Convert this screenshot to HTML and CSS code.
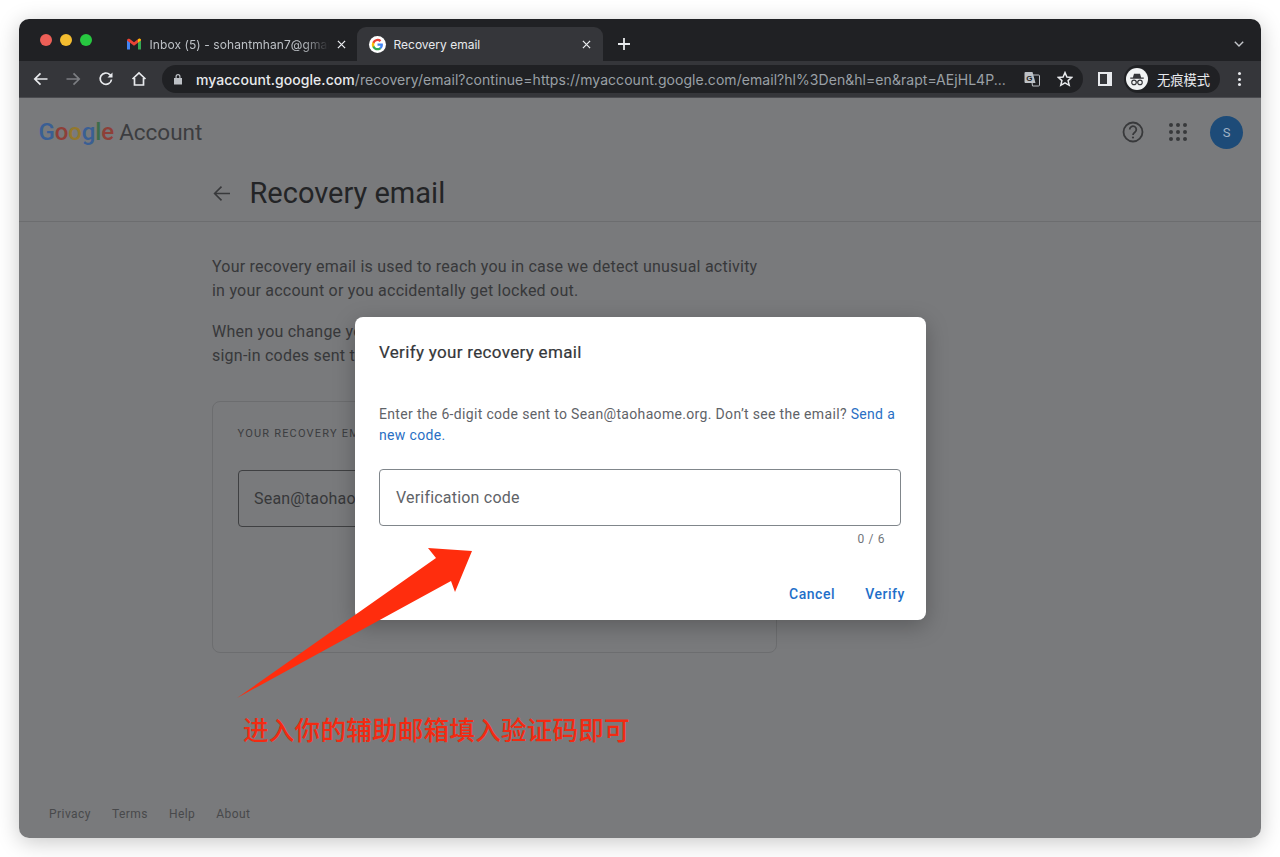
FILE: index.html
```html
<!DOCTYPE html>
<html lang="en">
<head>
<meta charset="utf-8">
<title>Recovery email</title>
<link rel="stylesheet" href="styles.css">
</head>
<body>
<div class="window">
  <div class="tabstrip">
    <div class="lights"><span class="light red"></span><span class="light yellow"></span><span class="light green"></span></div>
    <div class="tab inactive">
      <svg class="favicon" viewBox="0 0 16 16"><path d="M1 13.500V4l3 2.200v7.300z" fill="#4285f4"/><path d="M15 13.500V4l-3 2.200v7.300z" fill="#34a853"/><path d="M1 4.500C1 2.800 2.600 2.200 3.800 3L8 6.200 12.200 3C13.400 2.200 15 2.800 15 4.500L12 6.700 8 9.700 4 6.700z" fill="#ea4335"/><path d="M12 6.500 15 4.300C15 3.200 14.300 2.500 13.500 2.500L12 3.200z" fill="#fbbc04"/></svg>
      <span class="tab-title fade">Inbox (5) - sohantmhan7@gmail.com</span>
      <svg class="tab-close" viewBox="0 0 10 10"><path d="M1 1l8 8M9 1l-8 8"/></svg>
    </div>
    <div class="tab active">
      <span class="g-badge"><svg viewBox="0 0 18 18"><path d="M16.500 9.200c0-.6-.1-1.100-.2-1.600H9v3h4.200a3.600 3.600 0 0 1-1.600 2.400v2h2.600c1.500-1.400 2.300-3.400 2.300-5.800z" fill="#4285f4"/><path d="M9 17c2.100 0 3.900-.7 5.200-1.900l-2.600-2c-.7.500-1.600.8-2.600.8-2 0-3.700-1.400-4.300-3.200H2v2A8 8 0 0 0 9 17z" fill="#34a853"/><path d="M4.700 10.700a4.800 4.800 0 0 1 0-3.100v-2H2a8 8 0 0 0 0 7.200z" fill="#fbbc04"/><path d="M9 4.200c1.200 0 2.200.4 3 1.200l2.300-2.300A8 8 0 0 0 2 5.600l2.700 2C5.300 5.700 7 4.200 9 4.200z" fill="#ea4335"/></svg></span>
      <span class="tab-title">Recovery email</span>
      <svg class="tab-close" viewBox="0 0 10 10"><path d="M1 1l8 8M9 1l-8 8"/></svg>
    </div>
    <svg class="new-tab" viewBox="0 0 12 12"><path d="M6 0v12M0 6h12"/></svg>
    <svg class="tab-menu" viewBox="0 0 10 6"><path d="M.8.800 5 5l4.200-4.200"/></svg>
  </div>
  <div class="toolbar">
    <svg class="tool" viewBox="0 0 16 16"><path d="M14.500 8H2M7.500 2.300 1.800 8l5.700 5.700"/></svg>
    <svg class="tool dim" viewBox="0 0 16 16"><path d="M1.500 8H14M8.500 2.300 14.200 8l-5.700 5.700"/></svg>
    <svg class="tool" viewBox="0 0 16 16"><path d="M13.500 8.500A5.700 5.700 0 1 1 11.800 3.600L13.800 5.500"/><path class="solid" d="M14.500 1.500v5h-5z"/></svg>
    <svg class="tool" viewBox="0 0 16 16"><path d="M1.500 8 8 2l6.500 6M3.500 7v7h9V7"/></svg>
    <div class="omnibox">
      <svg class="lock" viewBox="0 0 10 12"><path d="M2.500 5V3.500a2.500 2.500 0 0 1 5 0V5h1.500v6.500H1V5zM3.700 5h2.600V3.500a1.300 1.300 0 0 0-2.600 0z"/></svg>
      <div class="url"><b>myaccount.google.com</b>/recovery/email?continue=https://myaccount.google.com/email?hl%3Den&amp;hl=en&amp;rapt=AEjHL4P...</div>
      <svg class="translate" viewBox="0 0 16 16"><path class="back-sheet" d="M7 4h7.500a1 1 0 0 1 1 1v9a1 1 0 0 1-1 1H8.500z"/><path class="front-sheet" d="M1.500 1h7l3 11h-10a1 1 0 0 1-1-1V2a1 1 0 0 1 1-1z"/><text x="2.300" y="9.500" class="g-letter">G</text></svg>
      <svg class="star" viewBox="0 0 16 16"><path d="M8 1.600l1.900 4.400 4.800.4-3.600 3.200 1.100 4.700L8 11.800l-4.200 2.500 1.100-4.700L1.300 6.400 6.100 6z"/></svg>
    </div>
    <div class="side-panel"></div>
    <div class="incognito">
      <span class="incognito-badge"><svg viewBox="0 0 24 24"><path class="hat" d="M8 5h8l1.500 5H21v1.500H3V10h3.500z"/><circle class="glass" cx="8" cy="16.500" r="3"/><circle class="glass" cx="16" cy="16.500" r="3"/><path class="glass" d="M11 16h2"/></svg></span>
      <span class="incognito-text">无痕模式</span>
    </div>
    <div class="kebab"><i></i><i></i><i></i></div>
  </div>
  <div class="page">
    <header class="page-head">
      <div class="brand"><span class="g-blue">G</span><span class="g-red">o</span><span class="g-yellow">o</span><span class="g-blue">g</span><span class="g-green">l</span><span class="g-red">e</span><span class="brand-sub">Account</span></div>
      <div class="head-icons">
        <svg class="help" viewBox="0 0 24 24"><circle cx="12" cy="12" r="9.500"/><path d="M8.700 9.500a3.300 3.300 0 1 1 5.200 2.700c-1.200.9-1.900 1.400-1.900 2.800"/><circle class="dot" cx="12" cy="17.500" r="1.100"/></svg>
        <div class="apps"><i></i><i></i><i></i><i></i><i></i><i></i><i></i><i></i><i></i></div>
        <div class="avatar">S</div>
      </div>
    </header>
    <div class="title-row">
      <svg class="title-back" viewBox="0 0 16 16"><path d="M16 8H1.500M8 1.500 1.500 8 8 14.500"/></svg>
      <h1>Recovery email</h1>
    </div>
    <main class="content">
      <p>Your recovery email is used to reach you in case we detect unusual activity<br>in your account or you accidentally get locked out.</p>
      <p>When you change your recovery email, you’ll continue to receive security alerts and<br>sign-in codes sent to your previous recovery email for 7 days.</p>
      <section class="card">
        <div class="card-label">YOUR RECOVERY EMAIL</div>
        <div class="card-input">Sean@taohaome.org</div>
      </section>
    </main>
    <footer class="page-foot"><span>Privacy</span><span>Terms</span><span>Help</span><span>About</span></footer>

    <div class="dialog">
      <h2>Verify your recovery email</h2>
      <p class="dialog-text">Enter the 6-digit code sent to Sean@taohaome.org. Don’t see the email? <a>Send a new code.</a></p>
      <div class="code-field">Verification code</div>
      <div class="counter">0 / 6</div>
      <div class="actions"><a>Cancel</a><a>Verify</a></div>
    </div>

    <svg class="arrow" viewBox="0 0 240 155"><path d="M0 154 L199 14 L191 4 L235 7 L218 48 L214 37 Z"/></svg>
    <div class="note">进入你的辅助邮箱填入验证码即可</div>
  </div>
</div>
</body>
</html>
```
FILE: styles.css
```css
* { box-sizing: border-box; }
html, body { margin: 0; height: 100%; }
body { background: #fff; padding: 19px 19px 19px 18.500px; overflow: hidden; font-family: Roboto, "Noto Sans", sans-serif; }
.window { height: 819px; border-radius: 10px; overflow: hidden; display: flex; flex-direction: column; box-shadow: 0 4px 22px rgba(0,0,0,.22); }

.tabstrip { height: 42px; flex: none; background: #202124; display: flex; align-items: flex-end; position: relative; padding-left: 98px; }
.lights { position: absolute; left: 21px; top: 15px; display: flex; gap: 8px; }
.light { width: 12px; height: 12px; border-radius: 50%; }
.red { background: #ed5f57; } .yellow { background: #f4bd30; } .green { background: #27c840; }
.tab { height: 34px; display: flex; align-items: center; color: #dadce0; font: 12px Inter, "Liberation Sans", sans-serif; }
.tab.inactive { width: 240px; padding-left: 9px; color: #bdc1c6; letter-spacing: .08px; }
.tab.active { width: 246px; background: #35363a; border-radius: 9px 9px 0 0; padding-left: 12px; color: #e8eaed; }
.favicon { width: 16px; height: 16px; flex: none; margin-right: 8px; }
.g-badge { width: 17px; height: 17px; border-radius: 50%; background: #fff; display: flex; align-items: center; justify-content: center; flex: none; margin-right: 8px; }
.g-badge svg { width: 13px; height: 13px; }
.tab-title { flex: 1; white-space: nowrap; overflow: hidden; min-width: 0; }
.tab-title.fade { -webkit-mask-image: linear-gradient(90deg, #000 85%, transparent); mask-image: linear-gradient(90deg, #000 85%, transparent); }
.tab-close { width: 9px; height: 9px; flex: none; margin: 0 12px 0 8px; fill: none; stroke: #e8eaed; stroke-width: 1.400; }
.inactive .tab-close { margin-right: 11px; }
.new-tab { width: 12px; height: 12px; margin: 0 0 11px 15px; fill: none; stroke: #e8eaed; stroke-width: 1.800; }
.tab-menu { position: absolute; right: 17px; top: 22px; width: 10px; height: 6px; fill: none; stroke: #c4c7cb; stroke-width: 1.400; }

.toolbar { height: 37px; flex: none; background: #35363a; display: flex; align-items: center; padding-left: 14px; border-bottom: 1px solid #4a4b4f; }
.tool { width: 16px; height: 16px; margin-right: 16.700px; flex: none; fill: none; stroke: #e8eaed; stroke-width: 1.700; }
.tool.dim { stroke: #7c7e82; }
.tool .solid { fill: #e8eaed; stroke: none; }
.omnibox { width: 921px; height: 28px; margin-left: -1.300px; background: #202124; border-radius: 14px; display: flex; align-items: center; padding-left: 11.500px; flex: none; }
.lock { width: 10px; height: 12px; fill: #bdc1c6; flex: none; margin-right: 12.500px; }
.url { flex: 1; min-width: 0; white-space: nowrap; overflow: hidden; color: #9aa0a6; font: 14px Inter, "Liberation Sans", sans-serif; letter-spacing: .05px; }
.url b { font-weight: 500; color: #e8eaed; }
.translate { width: 16px; height: 16px; flex: none; margin: 0 17px 0 14px; }
.back-sheet { fill: none; stroke: #bdc1c6; stroke-width: 1; }
.front-sheet { fill: #bdc1c6; }
.g-letter { font: 700 8px "Liberation Sans", sans-serif; fill: #202124; }
.star { width: 16px; height: 16px; flex: none; margin-right: 10px; fill: none; stroke: #e8eaed; stroke-width: 1.500; }
.side-panel { width: 14px; height: 14px; flex: none; margin-left: 15px; border: 2px solid #e8eaed; border-right-width: 5px; background: #35363a; }
.incognito { width: 96px; height: 28px; flex: none; margin-left: 12px; border-radius: 14px; background: #202124; display: flex; align-items: center; padding-left: 2px; }
.incognito-badge { width: 22px; height: 22px; border-radius: 50%; background: #f1f3f4; display: flex; align-items: center; justify-content: center; flex: none; margin-right: 9px; }
.incognito-badge svg { width: 18px; height: 18px; }
.hat { fill: #35363a; }
.glass { fill: none; stroke: #35363a; stroke-width: 1.500; }
.incognito-text { color: #e8eaed; font: 13.300px "Noto Sans CJK SC", sans-serif; white-space: nowrap; }
.kebab { display: flex; flex-direction: column; gap: 2.500px; margin-left: 18px; }
.kebab i { width: 3px; height: 3px; border-radius: 50%; background: #e8eaed; }

.page { flex: 1; position: relative; background: #797a7c; display: flex; flex-direction: column; color: #2f3033; }
.page-head { height: 68px; flex: none; display: flex; align-items: center; justify-content: space-between; padding: 0 18px 0 20px; }
.brand { font: 500 24px Roboto, sans-serif; letter-spacing: -.1px; display: flex; align-items: baseline; }
.g-blue { color: #3a5f94; } .g-red { color: #8e3f38; } .g-yellow { color: #93782c; } .g-green { color: #3d6c4a; }
.brand-sub { color: #3c3d40; margin-left: 5px; font-size: 22.500px; font-weight: 400; letter-spacing: 0; }
.head-icons { display: flex; align-items: center; }
.help { width: 24px; height: 24px; fill: none; stroke: #38393b; stroke-width: 1.800; margin-right: 24px; }
.help .dot { fill: #38393b; stroke: none; }
.apps { display: grid; grid-template-columns: repeat(3, 4px); gap: 3px; margin-right: 23px; }
.apps i { width: 4px; height: 4px; border-radius: 50%; background: #38393b; }
.avatar { width: 33px; height: 33px; border-radius: 50%; background: #1d4b78; color: #9fb2c6; display: flex; align-items: center; justify-content: center; font-size: 13px; }
.title-row { height: 56px; flex: none; display: flex; align-items: center; padding: 0 0 1px 194px; border-bottom: 1px solid #6c6d6f; }
.title-back { width: 17px; height: 17px; fill: none; stroke: #38393b; stroke-width: 1.500; margin-right: 20px; }
h1 { margin: 0; font: 400 29px Roboto, sans-serif; color: #232426; }
.content { flex: 1; padding: 33px 0 0 193.500px; width: 760px; }
.content p { margin: 0 0 17px; font-size: 16px; line-height: 24px; color: #37383a; white-space: nowrap; letter-spacing: .23px; }
.card { width: 565px; height: 252px; margin-top: 33px; margin-left: -.500px; border: 1px solid #6c6d6f; border-radius: 8px; padding: 25px 25px; }
.card-label { font-size: 11px; letter-spacing: 1.200px; color: #3c3d40; font-weight: 400; line-height: 13px; }
.card-input { width: 300px; height: 57px; margin-top: 30px; border: 1px solid #3f4042; border-radius: 4px; padding: 0 15.500px; line-height: 55px; font-size: 16px; letter-spacing: .2px; color: #37383a; }
.page-foot { position: absolute; left: 30.500px; bottom: 17px; display: flex; gap: 21px; font-size: 12px; letter-spacing: .45px; color: #48494b; line-height: 14px; }

.dialog { position: absolute; left: 336.500px; top: 219px; width: 571px; height: 303px; background: #fff; border-radius: 8px; padding: 25px 24px 24px; box-shadow: 0 6px 22px rgba(0,0,0,.25); color: #5f6368; }
.dialog h2 { margin: 0; font: 400 17px/20px Roboto, sans-serif; color: #35373a; letter-spacing: .32px; -webkit-text-stroke: .2px #35373a; }
.dialog-text { margin: 42px 0 0; font-size: 14px; line-height: 20.500px; letter-spacing: .33px; }
.dialog a { color: #1f6fc9; }
.dialog-text a { color: #2a6fc4; }
.code-field { height: 57px; margin-top: 24px; margin-right: 1px; border: 1px solid #80868b; border-radius: 4px; padding: 0 16px; line-height: 55px; font-size: 16px; letter-spacing: .2px; }
.counter { text-align: right; font-size: 12px; letter-spacing: .6px; padding-right: 17px; margin-top: 6px; line-height: 14px; color: #70757a; }
.actions { display: flex; justify-content: flex-end; gap: 30px; margin: 40px -3px 0 0; font: 500 14px/16px Roboto, sans-serif; letter-spacing: .55px; }
.arrow { position: absolute; left: 218.500px; top: 446px; width: 240px; height: 155px; fill: #ff2d0d; }
.note { position: absolute; left: 224.500px; top: 615px; font: 500 25.600px/32px "Noto Sans CJK SC", sans-serif; letter-spacing: .2px; color: #f32a12; white-space: nowrap; }
```
